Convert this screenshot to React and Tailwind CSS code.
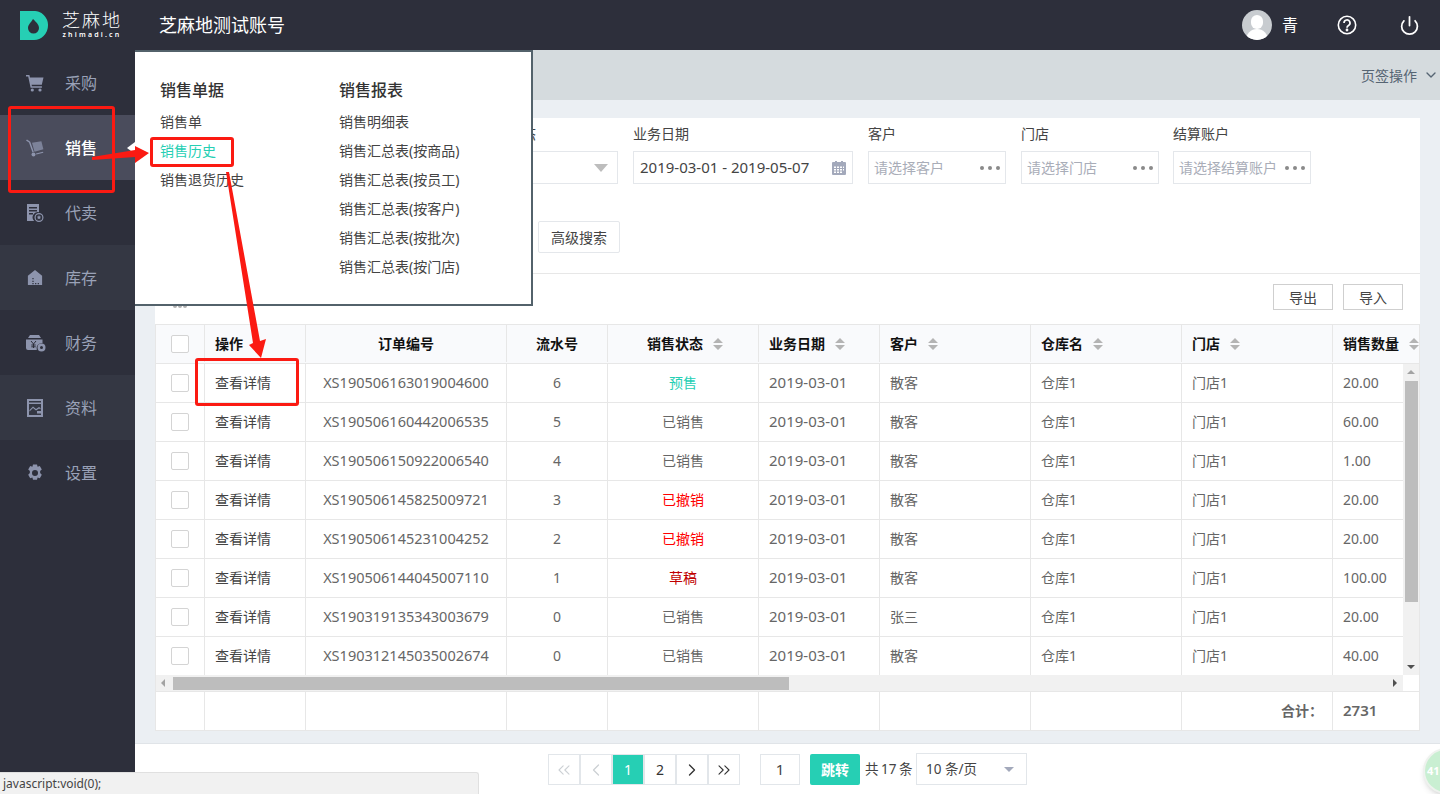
import { ChevronDown, ChevronLeft, ChevronRight, ChevronsLeft, ChevronsRight, Power } from 'lucide-react'

const NAV = [
  { name: '采购', icon: 'cart', bg: 'bg-[#2d2f3b]' },
  { name: '销售', icon: 'trolley', bg: 'bg-[#4a4c5c]', active: true },
  { name: '代卖', icon: 'doc', bg: 'bg-[#2d2f3b]' },
  { name: '库存', icon: 'house', bg: 'bg-[#343743]' },
  { name: '财务', icon: 'money', bg: 'bg-[#2d2f3b]' },
  { name: '资料', icon: 'chart', bg: 'bg-[#343743]' },
  { name: '设置', icon: 'gear', bg: 'bg-[#2d2f3b]' },
]

const ROWS = [
  { no: 'XS190506163019004600', serial: 6, status: '预售', color: 'text-[#26cfb4]', customer: '散客', qty: '20.00' },
  { no: 'XS190506160442006535', serial: 5, status: '已销售', color: 'text-[#666666]', customer: '散客', qty: '60.00' },
  { no: 'XS190506150922006540', serial: 4, status: '已销售', color: 'text-[#666666]', customer: '散客', qty: '1.00' },
  { no: 'XS190506145825009721', serial: 3, status: '已撤销', color: 'text-[#ff0000]', customer: '散客', qty: '20.00' },
  { no: 'XS190506145231004252', serial: 2, status: '已撤销', color: 'text-[#ff0000]', customer: '散客', qty: '20.00' },
  { no: 'XS190506144045007110', serial: 1, status: '草稿', color: 'text-[#c00000]', customer: '散客', qty: '100.00' },
  { no: 'XS190319135343003679', serial: 0, status: '已销售', color: 'text-[#666666]', customer: '张三', qty: '20.00' },
  { no: 'XS190312145035002674', serial: 0, status: '已销售', color: 'text-[#666666]', customer: '散客', qty: '40.00' },
]

function NavIcon({ type }) {
  const cls = 'w-[18px] h-[18px] fill-[#8d94ad]'
  if (type === 'cart') return (
    <svg viewBox="0 0 18 18" className={cls}>
      <path d="M0 1h3.4l.6 2.4H17.5l-1.7 7.4H5.6l.3 1.4h10v1.5H4.6L2.2 2.5H0z" />
      <circle cx="6.3" cy="16" r="1.6" /><circle cx="14" cy="16" r="1.6" />
    </svg>
  )
  if (type === 'trolley') return (
    <svg viewBox="0 0 18 18" className={cls}>
      <path d="M0 1.5 1 .5l3.2 2.2 3.6 10.1-1.3.6L3 3.6z" />
      <path d="m6 3.8 9.4-1.5 2 8-8.9 2.4z" opacity=".75" />
      <circle cx="7.5" cy="15.5" r="2" />
      <path d="m10 14.5 7-1.8.3 1-7 1.9z" />
    </svg>
  )
  if (type === 'doc') return (
    <svg viewBox="0 0 18 18" className={cls}>
      <path d="M1 0h12v8.2A5.2 5.2 0 0 0 8.2 17H1zM3 3v1.4h8V3zm0 3v1.4h8V6zm0 3v1.4h4V9z" />
      <path fillRule="evenodd" d="M13 9a4.5 4.5 0 1 1 0 9 4.5 4.5 0 0 1 0-9zm0 1.2a3.3 3.3 0 1 0 0 6.6 3.3 3.3 0 0 0 0-6.6z" />
      <path d="m13 11 .7 1.5 1.6.2-1.2 1.1.3 1.6-1.4-.8-1.4.8.3-1.6-1.2-1.1 1.6-.2z" />
    </svg>
  )
  if (type === 'house') return (
    <svg viewBox="0 0 18 18" className="w-[16px] h-[18px] fill-[#8d94ad] ml-px">
      <path fillRule="evenodd" d="M9 0 17 6.5V17H1V6.5zM6 9v1.5h1.5V9zm0 3v1.5h1.5V12zm0 2.5V16h1.5v-1.5zm3 0V16h1.5v-1.5zm3 0V16h1.5v-1.5z" />
    </svg>
  )
  if (type === 'money') return (
    <svg viewBox="0 0 20 18" className="w-[20px] h-[18px] fill-[#8d94ad]">
      <path d="M4 1h9l2 3H2z" />
      <path d="M0 5.5h16.5v3.8A5 5 0 0 0 10.8 16H2a2 2 0 0 1-2-2z" />
      <path stroke="#2d2f3b" strokeWidth="1" fill="none" d="m5 7 2.5 3L10 7M7.500 10v4M5.300 11h4.400M5.300 12.800h4.400" />
      <path fillRule="evenodd" d="M15.5 9.5a4 4 0 1 1 0 8 4 4 0 0 1 0-8zm0 2.5a1.5 1.5 0 1 0 0 3 1.5 1.5 0 0 0 0-3z" />
    </svg>
  )
  if (type === 'chart') return (
    <svg viewBox="0 0 18 18" className={cls}>
      <path fillRule="evenodd" d="M1 0h16v18H1zM3 2v1.5h12V2zm0 3v11h12V5z" />
      <path d="M3.5 11 7 7.5l3 2.5 3-2 1.5 1v1.200L13 9.500l-3 2-3-2.500-3.500 3.500zM11 12h4v2.500h-4z" />
    </svg>
  )
  return (
    <svg viewBox="0 0 18 18" className={cls}>
      <path fillRule="evenodd" d="M7 .5h4l.6 2.300 2.200-.8 2 3.500-1.700 1.600.1 1-.1 1 1.700 1.600-2 3.500-2.200-.8-.6 2.300H7l-.6-2.300-2.200.8-2-3.500L3.900 9.100l-.1-1 .1-1L2.200 5.500l2-3.500 2.200.8zM9 6a3 3 0 1 0 0 6 3 3 0 0 0 0-6z" />
    </svg>
  )
}

function Sort() {
  return (
    <svg viewBox="0 0 10 12" className="w-[10px] h-[12px] fill-[#b4b4b4] shrink-0">
      <path d="M5 0 10 5H0zM5 12 0 7h10z" />
    </svg>
  )
}

function Dots() {
  return (
    <span className="flex gap-[4px] items-center">
      <i className="block w-[4px] h-[4px] rounded-full bg-[#8a8a8a]" />
      <i className="block w-[4px] h-[4px] rounded-full bg-[#8a8a8a]" />
      <i className="block w-[4px] h-[4px] rounded-full bg-[#8a8a8a]" />
    </span>
  )
}

function Field({ label, className, children }) {
  return (
    <div className={`shrink-0 ${className}`}>
      <div className="h-5 leading-5 text-[14px] text-[#444]">{label}</div>
      <div className="mt-[7px] h-[33px] border border-[#e4e7eb] flex items-center justify-between pl-[5px] pr-[5px] bg-white">
        {children}
      </div>
    </div>
  )
}

function PickField({ label, placeholder, className }) {
  return (
    <Field label={label} className={className}>
      <span className="text-[14px] text-[#a9adb8] whitespace-nowrap">{placeholder}</span>
      <Dots />
    </Field>
  )
}

function Check() {
  return <span className="block w-[18px] h-[18px] border border-[#d4d4d4] rounded-[2px] bg-white" />
}

function PageBtn({ children, active, className = '' }) {
  return (
    <span
      className={`w-[32px] h-[31px] border border-[#e2e6ea] flex items-center justify-center text-[14px] ${
        active ? 'bg-[#26cfb4] text-white border-[#26cfb4]' : 'bg-white text-[#333]'
      } ${className}`}
    >
      {children}
    </span>
  )
}

function MenuLink({ children, active }) {
  return (
    <a className={`block h-[29px] leading-[29px] text-[14px] whitespace-nowrap ${active ? 'text-[#26cfb4]' : 'text-[#444]'}`}>
      {children}
    </a>
  )
}

export default function App() {
  return (
    <div className="relative w-[1440px] h-[794px] overflow-hidden flex flex-col bg-white font-['Noto_Sans','Noto_Sans_CJK_SC',sans-serif]">
      {/* Top bar */}
      <header className="h-[50px] shrink-0 bg-[#2d2f3b] flex items-center text-white">
        <div className="w-[159px] shrink-0 pl-[20px] flex items-center gap-[14px]">
          <svg viewBox="0 0 28 29" className="w-[28px] h-[29px]">
            <path d="M0 0h13a14 14 0 0 1 15 14.500A14.500 14.500 0 0 1 13 29H0z" fill="#26cfb4" />
            <path d="M13 8c3 3 6 5.500 6 9a5.500 5.500 0 0 1-11 0c0-3.500 3.500-6 5-9z" fill="#2d2f3b" />
          </svg>
          <div className="flex flex-col items-center leading-none">
            <span className="text-[18px] tracking-[2px] font-light leading-[19px] whitespace-nowrap">芝麻地</span>
            <span className="text-[7px] tracking-[2.200px] leading-[9px] font-semibold whitespace-nowrap">zhimadi.cn</span>
          </div>
        </div>
        <div className="text-[18px] whitespace-nowrap">芝麻地测试账号</div>
        <div className="ml-auto flex items-center">
          <span className="relative w-[30px] h-[30px] rounded-full bg-[#c8ccd0] overflow-hidden">
            <span className="absolute left-[9px] top-[5px] w-[12px] h-[14px] rounded-full bg-white" />
            <span className="absolute left-[4px] top-[19px] w-[22px] h-[14px] rounded-t-full bg-white" />
          </span>
          <span className="ml-[10px] text-[16px] w-[16px]">青</span>
          <svg viewBox="0 0 20 20" className="ml-[39px] w-[20px] h-[20px]" fill="none" stroke="#fff" strokeWidth="1.600">
            <circle cx="10" cy="10" r="8.700" />
            <path d="M7 8a3 3 0 1 1 4.500 2.500c-1 .6-1.500 1.100-1.500 2.300" strokeWidth="1.700" />
            <circle cx="10" cy="15" r=".6" fill="#fff" />
          </svg>
          <Power className="ml-[42px] mr-[20px] w-[21px] h-[21px]" strokeWidth={2} />
        </div>
      </header>

      <div className="flex flex-1 min-h-0">
        {/* Side nav */}
        <nav className="w-[135px] shrink-0 bg-[#2d2f3b]">
          {NAV.map((item) => (
            <div key={item.name} className={`h-[65px] flex items-center ${item.bg}`}>
              <span className="w-[65px] pl-[26px] shrink-0 flex items-center">
                <NavIcon type={item.icon} />
              </span>
              <span className={`text-[16px] ${item.active ? 'text-white font-medium' : 'text-[#9aa2b8]'}`}>{item.name}</span>
            </div>
          ))}
        </nav>

        <main className="flex-1 min-w-0 flex flex-col">
          {/* Tabs bar */}
          <div className="h-[50px] shrink-0 bg-[#d5dbde] flex items-center justify-end pr-[1px] text-[14px] text-[#566573]">
            页签操作
            <ChevronDown className="ml-[6px] w-[16px] h-[16px]" strokeWidth={2} />
          </div>

          {/* Content */}
          <div className="h-[644px] shrink-0 bg-[#ebeff3] border-b border-[#e0e4e8] px-[20px] pt-[18px]">
            <div className="bg-white">
              {/* Filters */}
              <div className="h-[156px] border-b border-[#e7e7e7] pt-[6px]">
                <div className="flex gap-[15px] pl-[325px]">
                  <Field label="销售状态" className="w-[138px]">
                    <span />
                    <span className="w-0 h-0 border-x-[7px] border-x-transparent border-t-[8px] border-t-[#bdbdbd] mr-[4px]" />
                  </Field>
                  <Field label="业务日期" className="w-[220px]">
                    <span className="text-[15px] text-[#444] pl-px whitespace-nowrap">2019-03-01 - 2019-05-07</span>
                    <svg viewBox="0 0 14 14" className="w-[14px] h-[14px] fill-[#a3a9bb] mr-px">
                      <path fillRule="evenodd" d="M1 1h2V0h2v1h4V0h2v1h2a1 1 0 0 1 1 1v11a1 1 0 0 1-1 1H1a1 1 0 0 1-1-1V2a1 1 0 0 1 1-1zm1 4.500v1.500h2V5.500zm3 0v1.500h2V5.500zm3 0v1.500h2V5.500zm3 0v1.500h1V5.500zM2 8v1.500h2V8zm3 0v1.500h2V8zm3 0v1.500h2V8zm3 0v1.500h1V8zM2 10.500V12h2v-1.500zm3 0V12h2v-1.500zm3 0V12h2v-1.500z" />
                    </svg>
                  </Field>
                  <PickField label="客户" placeholder="请选择客户" className="w-[138px]" />
                  <PickField label="门店" placeholder="请选择门店" className="w-[138px]" />
                  <PickField label="结算账户" placeholder="请选择结算账户" className="w-[138px] -ml-px" />
                </div>
                <div className="mt-[37px] pl-[383px]">
                  <button className="w-[82px] h-[32px] border border-[#e4e7eb] rounded-[2px] text-[14px] text-[#444] bg-white">高级搜索</button>
                </div>
              </div>

              {/* Toolbar */}
              <div className="h-[50px] flex items-start justify-between pt-[10px] pl-[18px] pr-[17px]">
                <span className="mt-[20px] flex gap-[1px]">
                  <i className="block w-[4px] h-[4px] rounded-full bg-[#b0b0b0]" />
                  <i className="block w-[4px] h-[4px] rounded-full bg-[#b0b0b0]" />
                  <i className="block w-[4px] h-[4px] rounded-full bg-[#b0b0b0]" />
                </span>
                <div className="flex gap-[10px]">
                  <button className="w-[60px] h-[26px] border border-[#cfcfcf] text-[14px] text-[#444] bg-white">导出</button>
                  <button className="w-[60px] h-[26px] border border-[#cfcfcf] text-[14px] text-[#444] bg-white">导入</button>
                </div>
              </div>

              {/* Table */}
              <div className="border border-[#e7e7e7] text-[14px] text-[#666]">
                <div className="flex h-[39px] pb-[1px] border-b border-[#e7e7e7] bg-[#f9fafc] font-semibold text-[#111] overflow-hidden">
                  <div className="w-[49px] shrink-0 border-r border-[#e7e7e7] flex items-center justify-center"><Check /></div>
                  <div className="w-[101px] shrink-0 border-r border-[#e7e7e7] flex items-center pl-[10px]">操作</div>
                  <div className="w-[201px] shrink-0 border-r border-[#e7e7e7] flex items-center justify-center">订单编号</div>
                  <div className="w-[101px] shrink-0 border-r border-[#e7e7e7] flex items-center justify-center">流水号</div>
                  <div className="w-[151px] shrink-0 border-r border-[#e7e7e7] flex items-center justify-center gap-[10px] pl-[4px]">销售状态<Sort /></div>
                  <div className="w-[121px] shrink-0 border-r border-[#e7e7e7] flex items-center pl-[10px] gap-[10px]">业务日期<Sort /></div>
                  <div className="w-[151px] shrink-0 border-r border-[#e7e7e7] flex items-center pl-[10px] gap-[10px]">客户<Sort /></div>
                  <div className="w-[151px] shrink-0 border-r border-[#e7e7e7] flex items-center pl-[10px] gap-[10px]">仓库名<Sort /></div>
                  <div className="w-[151px] shrink-0 border-r border-[#e7e7e7] flex items-center pl-[10px] gap-[10px]">门店<Sort /></div>
                  <div className="flex-1 flex items-center pl-[10px] gap-[10px] whitespace-nowrap">销售数量<Sort /></div>
                </div>

                <div className="flex">
                  <div className="flex-1 min-w-0">
                    {ROWS.map((row, i) => (
                      <div key={row.no} className={`flex ${i < 7 ? 'h-[39px] border-b border-[#e7e7e7]' : 'h-[38px]'}`}>
                        <div className="w-[49px] shrink-0 border-r border-[#e7e7e7] flex items-center justify-center"><Check /></div>
                        <div className="w-[101px] shrink-0 border-r border-[#e7e7e7] flex items-center pl-[10px] pb-[2px] text-[#444]">查看详情</div>
                        <div className="w-[201px] shrink-0 border-r border-[#e7e7e7] flex items-center justify-center text-[14.5px]">{row.no}</div>
                        <div className="w-[101px] shrink-0 border-r border-[#e7e7e7] flex items-center justify-center pb-[2px]">{row.serial}</div>
                        <div className={`w-[151px] shrink-0 border-r border-[#e7e7e7] flex items-center justify-center pb-[2px] ${row.color}`}>{row.status}</div>
                        <div className="w-[121px] shrink-0 border-r border-[#e7e7e7] flex items-center pl-[10px] text-[15px] pb-[2px]">2019-03-01</div>
                        <div className="w-[151px] shrink-0 border-r border-[#e7e7e7] flex items-center pl-[10px] pb-[2px]">{row.customer}</div>
                        <div className="w-[151px] shrink-0 border-r border-[#e7e7e7] flex items-center pl-[10px] pb-[2px]">仓库1</div>
                        <div className="w-[151px] shrink-0 border-r border-[#e7e7e7] flex items-center pl-[10px] pb-[2px]">门店1</div>
                        <div className="flex-1 flex items-center pl-[10px] pb-[2px]">{row.qty}</div>
                      </div>
                    ))}
                  </div>
                  {/* Vertical scrollbar */}
                  <div className="w-[16px] shrink-0 bg-[#f1f1f1] flex flex-col items-center">
                    <span className="mt-[6px] w-0 h-0 border-x-[4px] border-x-transparent border-b-[4px] border-b-[#a3a3a3]" />
                    <span className="mt-[7px] w-[13px] h-[221px] bg-[#bdbdbd]" />
                    <span className="mt-auto mb-[6px] w-0 h-0 border-x-[4px] border-x-transparent border-t-[4px] border-t-[#505050]" />
                  </div>
                </div>

                {/* Horizontal scrollbar */}
                <div className="flex h-[16px]">
                  <div className="flex-1 bg-[#f1f1f1] flex items-center">
                    <span className="ml-[5px] w-0 h-0 border-y-[4px] border-y-transparent border-r-[4px] border-r-[#a3a3a3]" />
                    <span className="ml-[8px] w-[616px] h-[13px] bg-[#bdbdbd]" />
                    <span className="ml-auto mr-[6px] w-0 h-0 border-y-[4px] border-y-transparent border-l-[4px] border-l-[#505050]" />
                  </div>
                  <div className="w-[16px] shrink-0 bg-white" />
                </div>

                {/* Totals */}
                <div className="flex h-[39px] border-t border-[#e7e7e7] font-semibold text-[#666]">
                  <div className="w-[49px] shrink-0 border-r border-[#e7e7e7]" />
                  <div className="w-[101px] shrink-0 border-r border-[#e7e7e7]" />
                  <div className="w-[201px] shrink-0 border-r border-[#e7e7e7]" />
                  <div className="w-[101px] shrink-0 border-r border-[#e7e7e7]" />
                  <div className="w-[151px] shrink-0 border-r border-[#e7e7e7]" />
                  <div className="w-[121px] shrink-0 border-r border-[#e7e7e7]" />
                  <div className="w-[151px] shrink-0 border-r border-[#e7e7e7]" />
                  <div className="w-[151px] shrink-0 border-r border-[#e7e7e7]" />
                  <div className="w-[151px] shrink-0 border-r border-[#e7e7e7] flex items-center justify-end pr-[9px] pb-[2px]">合计：</div>
                  <div className="flex-1 flex items-center pl-[10px] text-[15px] pb-[2px]">2731</div>
                </div>
              </div>
            </div>
          </div>

          {/* Pagination */}
          <div className="flex-1 flex items-start pt-[10px] pl-[413px] text-[14px] text-[#444]">
            <div className="flex">
              <PageBtn className="text-[#ccd0d4]"><ChevronsLeft className="w-[20px] h-[20px]" strokeWidth={1.3} /></PageBtn>
              <PageBtn className="text-[#ccd0d4]"><ChevronLeft className="w-[20px] h-[20px]" strokeWidth={1.5} /></PageBtn>
              <PageBtn active>1</PageBtn>
              <PageBtn>2</PageBtn>
              <PageBtn><ChevronRight className="w-[20px] h-[20px]" strokeWidth={1.6} /></PageBtn>
              <PageBtn><ChevronsRight className="w-[20px] h-[20px]" strokeWidth={1.3} /></PageBtn>
            </div>
            <span className="ml-[20px] w-[40px] h-[31px] border border-[#e2e6ea] flex items-center justify-center text-[15px] text-[#444]">1</span>
            <span className="ml-[10px] w-[50px] h-[31px] rounded-[2px] bg-[#26cfb4] text-white flex items-center justify-center font-semibold">跳转</span>
            <span className="ml-[5px] w-[46px] h-[31px] flex items-center whitespace-nowrap text-[13.5px] [word-spacing:-1px]">共 17 条</span>
            <span className="ml-[5px] -mt-px w-[111px] h-[32px] border border-[#e2e6ea] flex items-center justify-between pl-[9px] pr-[12px] text-[13.5px]">
              10 条/页
              <span className="w-0 h-0 border-x-[5px] border-x-transparent border-t-[5px] border-t-[#a3a9bb]" />
            </span>
          </div>
        </main>
      </div>

      {/* Mega menu popover */}
      <div className="absolute left-[135px] top-[50px] w-[398px] h-[256px] bg-white border-y-2 border-r-2 border-[#53626b] flex pl-[25px] pt-[26px]">
        <div className="w-[179px]">
          <div className="h-[24px] leading-[24px] text-[16px] font-medium text-[#333] mb-[5px]">销售单据</div>
          <MenuLink>销售单</MenuLink>
          <MenuLink active>销售历史</MenuLink>
          <MenuLink>销售退货历史</MenuLink>
        </div>
        <div>
          <div className="h-[24px] leading-[24px] text-[16px] font-medium text-[#333] mb-[5px]">销售报表</div>
          <MenuLink>销售明细表</MenuLink>
          <MenuLink>销售汇总表(按商品)</MenuLink>
          <MenuLink>销售汇总表(按员工)</MenuLink>
          <MenuLink>销售汇总表(按客户)</MenuLink>
          <MenuLink>销售汇总表(按批次)</MenuLink>
          <MenuLink>销售汇总表(按门店)</MenuLink>
        </div>
      </div>

      {/* Menu caret */}
      <span className="absolute left-[127px] top-[142px] w-0 h-0 border-y-[6px] border-y-transparent border-r-[8px] border-r-white" />

      {/* Red annotations */}
      <span className="absolute left-[8px] top-[106px] w-[107px] h-[87px] border-[3px] border-[#fb1a12] rounded-[3px]" />
      <span className="absolute left-[150px] top-[137px] w-[84px] h-[30px] border-[3px] border-[#fb1a12] rounded-[3px]" />
      <span className="absolute left-[195px] top-[358px] w-[104px] h-[48px] border-[3px] border-[#fb1a12] rounded-[3px]" />
      <svg viewBox="0 0 1440 794" className="absolute left-0 top-0 w-[1440px] h-[794px] pointer-events-none">
        <polygon points="92,157 135,150 135,146 149,153 135,163 135,157 92,160" fill="#fb1a12" />
        <polygon points="226,172 229,172 260,341 266,339 261,358 249,345 253,343" fill="#fb1a12" />
      </svg>

      {/* Browser status bar */}
      <div className="absolute left-0 bottom-0 w-[479px] h-[22px] bg-[#f1f1f1] border-t border-r border-[#e0e0e0] rounded-tr-[3px] pl-[3px] text-[12px] leading-[22px] text-[#444]">
        javascript:void(0);
      </div>

      {/* Floating badge */}
      <div className="absolute left-[1423px] top-[748px] w-[46px] h-[46px] rounded-full bg-[#c9efd2] border-2 border-[#eef2ee] shadow-md flex items-center pl-[2px] text-[11px] font-bold text-white">
        41
      </div>
    </div>
  )
}
